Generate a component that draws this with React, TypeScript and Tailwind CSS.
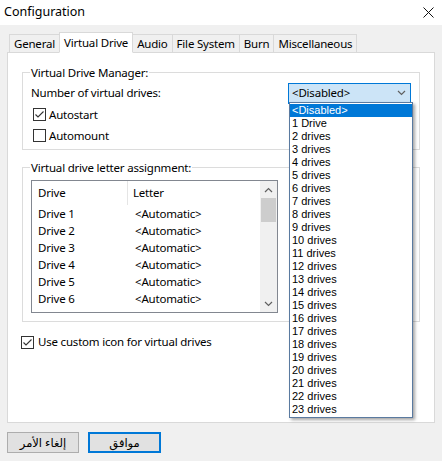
import React from "react";

const FONT = { fontFamily: '"Noto Sans", "DejaVu Sans", sans-serif' };
const LIST_FONT = { fontFamily: '"Liberation Sans", "DejaVu Sans", sans-serif' };

const TABS = ["General", "Virtual Drive", "Audio", "File System", "Burn", "Miscellaneous"];

const DRIVE_OPTIONS = [
  "<Disabled>",
  "1 Drive",
  ...Array.from({ length: 22 }, (_, i) => `${i + 2} drives`),
];

function Check({ checked }: { checked: boolean }) {
  return (
    <span className="w-[13px] h-[13px] border border-[#333] bg-white flex items-center justify-center shrink-0">
      {checked ? (
        <svg width="11" height="11" viewBox="0 0 11 11">
          <path d="M1.5 5.5 L4 8 L9.5 2.5" fill="none" stroke="#333" strokeWidth="1.1" />
        </svg>
      ) : null}
    </span>
  );
}

function Chevron({ up }: { up?: boolean }) {
  return (
    <svg width="9" height="6" viewBox="0 0 9 6">
      <path
        d={up ? "M1 5 L4.5 1.5 L8 5" : "M1 1 L4.5 4.5 L8 1"}
        fill="none"
        stroke="#606060"
        strokeWidth="1.2"
      />
    </svg>
  );
}

export default function App() {
  return (
    <div
      className="relative w-[442px] h-[461px] bg-[#f0f0f0] overflow-hidden text-[11.5px] tracking-[-0.2px] text-black"
      style={FONT}
    >
      {/* title bar */}
      <div className="h-[25px] bg-white flex items-center justify-between pl-[4px] pr-[8px]">
        <span className="text-[12.5px] tracking-normal">Configuration</span>
        <svg width="11" height="11" viewBox="0 0 11 11">
          <path d="M0.5 0.5 L10.5 10.5 M10.5 0.5 L0.5 10.5" stroke="#111" strokeWidth="1" />
        </svg>
      </div>

      {/* tabs */}
      <div className="flex items-end h-[27px] pl-[9px]">
        {TABS.map((t) => {
          const active = t === "Virtual Drive";
          return (
            <div
              key={t}
              className={`border border-[#d9d9d9] -mr-px flex items-center px-[4px] leading-[16px] ${
                active
                  ? "bg-white h-[21px] border-b-white relative z-10 -mb-px"
                  : "bg-[#f0f0f0] h-[18px] border-b-0"
              }`}
            >
              {t}
            </div>
          );
        })}
      </div>

      {/* tab page */}
      <div className="mx-[7px] h-[371px] bg-white border border-[#d9d9d9] px-[14px] pt-[12px]">
        <fieldset className="border border-[#dcdcdc] pl-[8px] pr-[8px] pb-[9px] h-[85px]">
          <legend className="px-[1px] -ml-[1px] leading-[15px]">Virtual Drive Manager:</legend>
          <div className="flex items-center justify-between h-[20px] mt-[3px]">
            <span>Number of virtual drives:</span>
            <div className="w-[123px] h-[21px] bg-[#cce4f7] border border-[#0078d7] flex items-center justify-between pl-[3px] pr-[4px]">
              <span>&lt;Disabled&gt;</span>
              <Chevron />
            </div>
          </div>
          <div className="flex items-center gap-[3px] h-[21px] pl-[2px] mt-[1px]">
            <Check checked />
            <span>Autostart</span>
          </div>
          <div className="flex items-center gap-[3px] h-[21px] pl-[2px]">
            <Check checked={false} />
            <span>Automount</span>
          </div>
        </fieldset>

        <fieldset className="border border-[#dcdcdc] pl-[8px] pr-[8px] mt-[10px] h-[162px]">
          <legend className="px-[1px] -ml-[1px] leading-[15px]">Virtual drive letter assignment:</legend>
          <div className="mt-[5px] w-[247px] h-[133px] border border-[#828790] flex">
            <div className="flex-1">
              <div className="flex h-[24px] items-center">
                <div className="w-[96px] h-full pl-[6px] flex items-center border-r border-[#e5e5e5]">Drive</div>
                <div className="pl-[5px]">Letter</div>
              </div>
              {[1, 2, 3, 4, 5, 6].map((n) => (
                <div key={n} className="flex h-[17px] items-center">
                  <div className="w-[96px] pl-[6px]">Drive {n}</div>
                  <div className="pl-[7px]">&lt;Automatic&gt;</div>
                </div>
              ))}
            </div>
            <div className="w-[17px] bg-[#f0f0f0] flex flex-col items-center">
              <div className="h-[17px] flex items-center">
                <Chevron up />
              </div>
              <div className="w-[15px] h-[24px] bg-[#cdcdcd]" />
              <div className="flex-1" />
              <div className="h-[17px] flex items-center">
                <Chevron />
              </div>
            </div>
          </div>
        </fieldset>

        <div className="flex items-center gap-[4px] h-[20px] -ml-[1px] mt-[10px]">
          <Check checked />
          <span>Use custom icon for virtual drives</span>
        </div>
      </div>

      {/* buttons */}
      <div className="flex gap-[9px] pl-[7px] mt-[9px]">
        <button
          type="button"
          className="w-[72px] h-[21px] bg-[#e1e1e1] border border-[#adadad] flex items-center justify-center tracking-normal"
          dir="rtl"
        >
          إلغاء الأمر
        </button>
        <button
          type="button"
          className="w-[73px] h-[21px] bg-[#e1e1e1] border-2 border-[#0078d7] flex items-center justify-center tracking-normal"
          dir="rtl"
        >
          موافق
        </button>
      </div>

      {/* open combo list */}
      <div
        className="absolute left-[289px] top-[102px] w-[124px] bg-white border border-[#5a7aa0] shadow-[2px_2px_3px_rgba(0,0,0,0.35)] py-[1px] z-20 text-[11px] tracking-normal"
        style={LIST_FONT}
      >
        {DRIVE_OPTIONS.map((o, i) => (
          <div
            key={o}
            className={`h-[13px] leading-[13px] px-[2px] ${i === 0 ? "bg-[#0078d7] text-white" : ""}`}
          >
            {o}
          </div>
        ))}
      </div>
    </div>
  );
}
